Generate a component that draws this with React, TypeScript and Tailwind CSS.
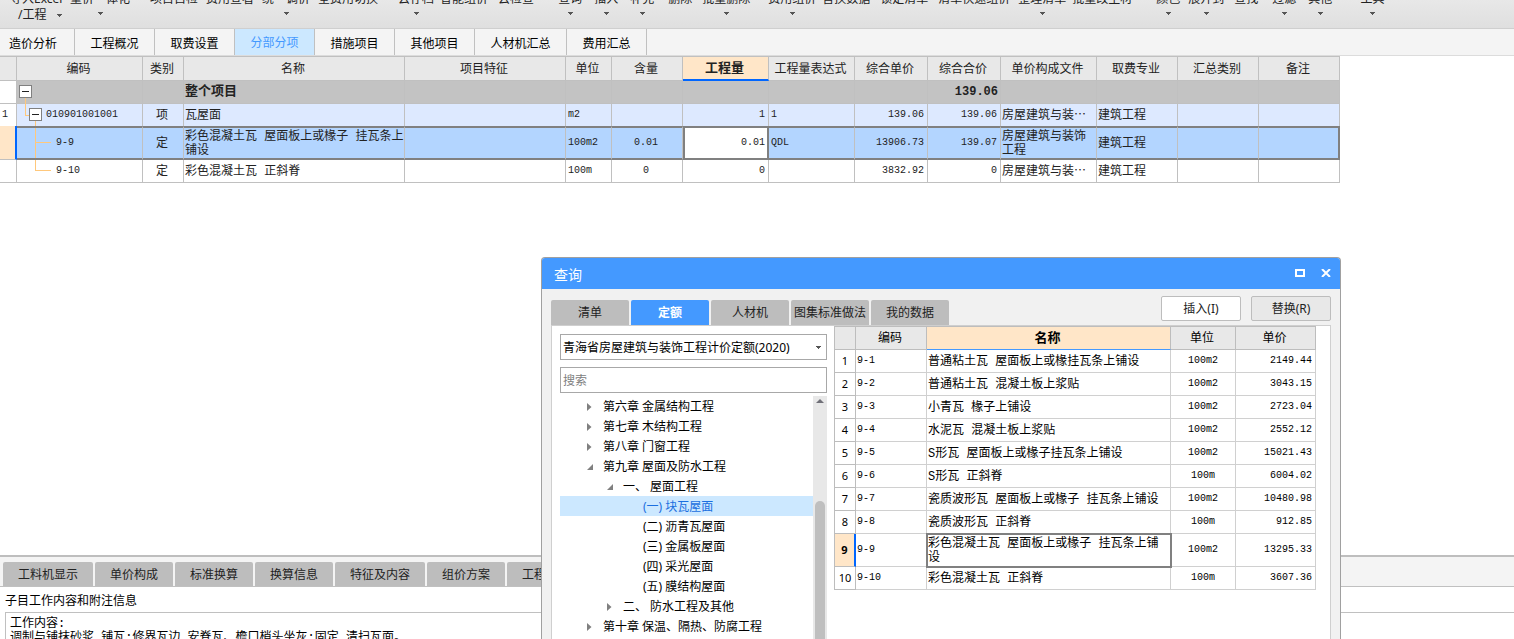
import React, { useState } from "react"
import clsx from "clsx"

interface RibbonItem {
  label: string
  gap: string
  arrow?: boolean
  second?: string
}

interface QuotaRow {
  code: string
  name: React.ReactNode
  unit: string
  price: string
}

interface TreeNode {
  label: string
  level: 1 | 2 | 3
  state?: "open" | "closed"
}

const ribbonItems: RibbonItem[] = [
  { label: "导入Excel", gap: "ml-2.5 w-13", arrow: true, second: "/工程" },
  { label: "量价一体化", gap: "ml-2", arrow: true },
  { label: "项目自检", gap: "ml-5" },
  { label: "费用查看", gap: "ml-2" },
  { label: "统一调价", gap: "ml-2", arrow: true },
  { label: "全费用切换", gap: "ml-2" },
  { label: "云存档", gap: "ml-5", arrow: true },
  { label: "智能组价", gap: "ml-1.5" },
  { label: "云检查", gap: "ml-2.5" },
  { label: "查询", gap: "ml-6", arrow: true },
  { label: "插入", gap: "ml-3", arrow: true },
  { label: "补充", gap: "ml-3", arrow: true },
  { label: "删除", gap: "ml-3.5" },
  { label: "批量删除", gap: "ml-2.5", arrow: true },
  { label: "费用组价", gap: "ml-4.5", arrow: true },
  { label: "替换数据", gap: "ml-1.5" },
  { label: "锁定清单", gap: "ml-2.5" },
  { label: "清单快速组价", gap: "ml-2.5" },
  { label: "整理清单", gap: "ml-2", arrow: true },
  { label: "批量改主材", gap: "ml-1.5" },
  { label: "颜色", gap: "ml-6", arrow: true },
  { label: "展开到", gap: "ml-2", arrow: true },
  { label: "查找", gap: "ml-2.5" },
  { label: "过滤", gap: "ml-3.5", arrow: true },
  { label: "其他", gap: "ml-3", arrow: true },
  { label: "工具", gap: "ml-7", arrow: true },
]

const moduleTabs = [
  { label: "造价分析", width: "w-[75px] pr-2" },
  { label: "工程概况", width: "w-20" },
  { label: "取费设置", width: "w-20" },
  { label: "分部分项", width: "w-20" },
  { label: "措施项目", width: "w-20" },
  { label: "其他项目", width: "w-20" },
  { label: "人材机汇总", width: "w-[92px]" },
  { label: "费用汇总", width: "w-20" },
]

const dockTabs = [
  { label: "工料机显示", width: "w-[90px]" },
  { label: "单价构成", width: "w-[78px]" },
  { label: "标准换算", width: "w-[78px]" },
  { label: "换算信息", width: "w-[78px]" },
  { label: "特征及内容", width: "w-[90px]" },
  { label: "组价方案", width: "w-[78px]" },
  { label: "工程量明细", width: "w-[90px]" },
]

const queryTabs = ["清单", "定额", "人材机", "图集标准做法", "我的数据"]

const treeNodes: TreeNode[] = [
  { label: "第六章 金属结构工程", level: 1, state: "closed" },
  { label: "第七章 木结构工程", level: 1, state: "closed" },
  { label: "第八章 门窗工程", level: 1, state: "closed" },
  { label: "第九章 屋面及防水工程", level: 1, state: "open" },
  { label: "一、 屋面工程", level: 2, state: "open" },
  { label: "(一) 块瓦屋面", level: 3 },
  { label: "(二) 沥青瓦屋面", level: 3 },
  { label: "(三) 金属板屋面", level: 3 },
  { label: "(四) 采光屋面", level: 3 },
  { label: "(五) 膜结构屋面", level: 3 },
  { label: "二、 防水工程及其他", level: 2, state: "closed" },
  { label: "第十章 保温、隔热、防腐工程", level: 1, state: "closed" },
]

const quotaRows: QuotaRow[] = [
  { code: "9-1", name: "普通粘土瓦 屋面板上或椽挂瓦条上铺设", unit: "100m2", price: "2149.44" },
  { code: "9-2", name: "普通粘土瓦 混凝土板上浆贴", unit: "100m2", price: "3043.15" },
  { code: "9-3", name: "小青瓦 椽子上铺设", unit: "100m2", price: "2723.04" },
  { code: "9-4", name: "水泥瓦 混凝土板上浆贴", unit: "100m2", price: "2552.12" },
  { code: "9-5", name: "S形瓦 屋面板上或椽子挂瓦条上铺设", unit: "100m2", price: "15021.43" },
  { code: "9-6", name: "S形瓦 正斜脊", unit: "100m", price: "6004.02" },
  { code: "9-7", name: "瓷质波形瓦 屋面板上或椽子 挂瓦条上铺设", unit: "100m2", price: "10480.98" },
  { code: "9-8", name: "瓷质波形瓦 正斜脊", unit: "100m", price: "912.85" },
  {
    code: "9-9",
    name: (
      <>
        彩色混凝土瓦 屋面板上或椽子 挂瓦条上铺
        <br />设
      </>
    ),
    unit: "100m2",
    price: "13295.33",
  },
  { code: "9-10", name: "彩色混凝土瓦 正斜脊", unit: "100m", price: "3607.36" },
]

const gridFont = "font-['Liberation_Mono','Noto_Sans_CJK_SC',monospace]"

function DownArrow({ className }: { className?: string }) {
  return (
    <svg className={clsx("h-[3px] w-[5px] shrink-0", className)} viewBox="0 0 5 3" shapeRendering="crispEdges">
      <path d="M0 0h5v1H4v1H3v1H2V2H1V1H0z" fill="#555" />
    </svg>
  )
}

function Ribbon() {
  return (
    <header className="h-[29px] shrink-0 overflow-hidden border-b border-[#cfcfcf] bg-linear-to-b from-[#e8e8e8] to-[#dfdfdf]">
      <div className="-mt-2 flex items-start">
        {ribbonItems.map((item) => (
          <button
            key={item.label}
            className={clsx("shrink-0 whitespace-nowrap text-left leading-[14px] text-[#222]", item.gap)}
          >
            <span className="block">{item.label}</span>
            {item.second ? (
              <span className="mt-0.5 flex items-center justify-between pl-2">
                {item.second}
                <DownArrow />
              </span>
            ) : (
              item.arrow && <DownArrow className="mx-auto mt-1.5" />
            )}
          </button>
        ))}
      </div>
    </header>
  )
}

function ModuleTabs() {
  const [active, setActive] = useState("分部分项")
  return (
    <nav className="flex h-[27px] shrink-0 border-b border-[#dcdcdc] bg-[#f4f4f4]">
      {moduleTabs.map((tab) => (
        <button
          key={tab.label}
          onClick={() => setActive(tab.label)}
          className={clsx(
            "shrink-0 border-r border-[#c0c0c0]",
            tab.width,
            active === tab.label ? "bg-[#cce8ff] pt-0.5 text-[#4499ff]" : "pt-1 text-black"
          )}
        >
          {tab.label}
        </button>
      ))}
    </nav>
  )
}

// Branch lines of the outline, with the expand box where a row has children
function Branch({ kind }: { kind: "root" | "item" | "middle" | "last" }) {
  const width = kind === "root" || kind === "item" ? "w-[29px]" : "w-[39px]"
  return (
    <svg className={clsx("h-full shrink-0 overflow-visible", width)} fill="none" shapeRendering="crispEdges">
      {kind === "root" && (
        <>
          <path d="M8.5 17V23" stroke="#ffc87c" />
          <rect x="2.5" y="4.5" width="12" height="12" fill="#fff" stroke="#808080" />
          <path d="M5 10.5h7" stroke="#222" />
        </>
      )}
      {kind === "item" && (
        <>
          <path d="M8.5 0V11.5H12M18.5 17V22" stroke="#ffc87c" />
          <rect x="12.5" y="4.5" width="12" height="12" fill="#fff" stroke="#808080" />
          <path d="M15 10.5h7" stroke="#222" />
        </>
      )}
      {kind === "middle" && <path d="M18.5 0V30M18.5 14.5H34" stroke="#ffc87c" />}
      {kind === "last" && <path d="M18.5 0V10.5H34" stroke="#ffc87c" />}
    </svg>
  )
}

function BillTable() {
  const headers = [
    "",
    "编码",
    "类别",
    "名称",
    "项目特征",
    "单位",
    "含量",
    "工程量",
    "工程量表达式",
    "综合单价",
    "综合合价",
    "单价构成文件",
    "取费专业",
    "汇总类别",
    "备注",
  ]
  const cell = "border-r border-b border-[#c0c0c0] p-0"
  const open = "border-r border-[#c0c0c0] p-0"
  const picked = "border-r border-y-2 border-r-[#c0c0c0] border-y-[#808080] p-0"
  const text = "pt-0.5 pl-px"
  const mid = "pt-0.5 pr-0.5 text-center"
  const num = "pl-0.5 text-[10px]"
  const numMid = "pr-0.5 text-center text-[10px]"
  const numEnd = "pr-[3px] text-right text-[10px]"

  return (
    <table
      className={clsx(
        "w-0 table-fixed border-separate border-spacing-0 border-t border-[#c0c0c0] leading-[14px] whitespace-nowrap text-[#222]",
        gridFont
      )}
    >
      <colgroup>
        <col className="w-[17px]" />
        <col className="w-[126px]" />
        <col className="w-[41px]" />
        <col className="w-[221px]" />
        <col className="w-[161px]" />
        <col className="w-[46px]" />
        <col className="w-[71px]" />
        <col className="w-[86px]" />
        <col className="w-[86px]" />
        <col className="w-[73px]" />
        <col className="w-[73px]" />
        <col className="w-[96px]" />
        <col className="w-[81px]" />
        <col className="w-[81px]" />
        <col className="w-[81px]" />
      </colgroup>
      <thead>
        <tr className="h-6">
          {headers.map((title, i) => (
            <th
              key={i}
              className={clsx(
                "border-r border-[#c0c0c0] p-0 pt-0.5 pr-0.5",
                title === "工程量"
                  ? "border-b-2 border-b-[#0066ff] bg-[#ffe6c8] text-[13px] font-bold"
                  : "border-b bg-[#e8e8e8] font-normal"
              )}
            >
              {title}
            </th>
          ))}
        </tr>
      </thead>
      <tbody>
        <tr className="h-[23px] bg-[#c3c3c3] font-bold">
          <td className={clsx(cell, "bg-white")} />
          <td className={cell}>
            <div className="flex h-[22px] items-center">
              <Branch kind="root" />
            </div>
          </td>
          <td className={cell} />
          <td className={clsx(cell, "pl-px text-[13px]")}>整个项目</td>
          <td className={cell} />
          <td className={cell} />
          <td className={cell} />
          <td className={cell} />
          <td className={cell} />
          <td className={cell} />
          <td className={clsx(cell, "pr-0.5 text-right")}>139.06</td>
          <td className={cell} />
          <td className={cell} />
          <td className={cell} />
          <td className={cell} />
        </tr>
        <tr className="h-[22px] bg-[#dde9ff]">
          <td className={clsx(open, num, "bg-white")}>1</td>
          <td className={clsx(open, "text-[10px]")}>
            <div className="flex h-[22px] items-center">
              <Branch kind="item" />
              010901001001
            </div>
          </td>
          <td className={clsx(open, mid)}>项</td>
          <td className={clsx(open, text)}>瓦屋面</td>
          <td className={open} />
          <td className={clsx(open, num)}>m2</td>
          <td className={open} />
          <td className={clsx(open, numEnd)}>1</td>
          <td className={clsx(open, num)}>1</td>
          <td className={clsx(open, numEnd)}>139.06</td>
          <td className={clsx(open, numEnd)}>139.06</td>
          <td className={clsx(open, text)}>房屋建筑与装⋯</td>
          <td className={clsx(open, text)}>建筑工程</td>
          <td className={open} />
          <td className={open} />
        </tr>
        <tr className="h-[34px] bg-[#b3d5ff]">
          <td className="border-r-2 border-b border-r-[#0066ff] border-b-[#c0c0c0] bg-[#ffe6c8]" />
          <td className={clsx(picked, "text-[10px]")}>
            <div className="flex h-[30px] items-center">
              <Branch kind="middle" />
              9-9
            </div>
          </td>
          <td className={clsx(picked, mid)}>定</td>
          <td className={clsx(picked, text)}>
            彩色混凝土瓦 屋面板上或椽子 挂瓦条上
            <br />
            铺设
          </td>
          <td className={picked} />
          <td className={clsx(picked, num)}>100m2</td>
          <td className={clsx(picked, numMid)}>0.01</td>
          <td className="border-2 border-[#808080] bg-white p-0 pr-0.5 text-right text-[10px]">0.01</td>
          <td className={clsx(picked, num)}>QDL</td>
          <td className={clsx(picked, numEnd)}>13906.73</td>
          <td className={clsx(picked, numEnd)}>139.07</td>
          <td className={clsx(picked, text)}>
            房屋建筑与装饰
            <br />
            工程
          </td>
          <td className={clsx(picked, text)}>建筑工程</td>
          <td className={picked} />
          <td className="border-y-2 border-r-2 border-[#808080]" />
        </tr>
        <tr className="h-[23px]">
          <td className={cell} />
          <td className={clsx(cell, "text-[10px]")}>
            <div className="flex h-[22px] items-center">
              <Branch kind="last" />
              9-10
            </div>
          </td>
          <td className={clsx(cell, mid)}>定</td>
          <td className={clsx(cell, text)}>彩色混凝土瓦 正斜脊</td>
          <td className={cell} />
          <td className={clsx(cell, num)}>100m</td>
          <td className={clsx(cell, numMid)}>0</td>
          <td className={clsx(cell, numEnd)}>0</td>
          <td className={cell} />
          <td className={clsx(cell, numEnd)}>3832.92</td>
          <td className={clsx(cell, numEnd)}>0</td>
          <td className={clsx(cell, text)}>房屋建筑与装⋯</td>
          <td className={clsx(cell, text)}>建筑工程</td>
          <td className={cell} />
          <td className={cell} />
        </tr>
      </tbody>
    </table>
  )
}

function DetailDock() {
  return (
    <section className="flex h-[84px] shrink-0 flex-col overflow-hidden border-t-2 border-[#bebebe] bg-[#f4f4f4]">
      <div className="flex gap-0.5 pt-[5px] pl-[3px]">
        {dockTabs.map((tab) => (
          <button
            key={tab.label}
            className={clsx("h-6 shrink-0 rounded-t-xs bg-[#bdbdbd] pt-0.5 text-[#222]", tab.width)}
          >
            {tab.label}
          </button>
        ))}
      </div>
      <div className="grow border-t border-[#c0c0c0] bg-white">
        <h2 className="pt-0.5 pl-[5px] leading-[23px] text-black">子目工作内容和附注信息</h2>
        <div
          className={clsx(
            "ml-[5px] border-t border-l border-[#c0c0c0] pt-1 pl-1 leading-[14px] whitespace-nowrap text-black",
            gridFont
          )}
        >
          <p>工作内容:</p>
          <p>调制与铺抹砂浆,铺瓦;修界瓦边,安脊瓦、檐口梢头坐灰;固定,清扫瓦面。</p>
        </div>
      </div>
    </section>
  )
}

function Caret({ state }: { state?: "open" | "closed" }) {
  if (!state) return <span className="w-4 shrink-0" />
  return (
    <svg className="h-2 w-4 shrink-0" viewBox="0 0 16 8">
      {state === "closed" ? (
        <path d="M0 0l4.500 4L0 8z" fill="#808080" />
      ) : (
        <path d="M6 1v6H0z" fill="#808080" />
      )}
    </svg>
  )
}

function ChapterTree() {
  const [selected, setSelected] = useState("(一) 块瓦屋面")
  return (
    <div className="mt-[3px] flex min-h-0 grow">
      <ul className="grow">
        {treeNodes.map((node) => (
          <li key={node.label}>
            <button
              onClick={() => setSelected(node.label)}
              className={clsx(
                "flex h-5 w-full items-center pt-0.5 text-left leading-4",
                node.level === 1 && "pl-[27px]",
                node.level === 2 && "pl-[47px]",
                node.level === 3 && "pl-[67px]",
                selected === node.label ? "bg-[#cce8ff] text-[#1a6fe0]" : "text-black"
              )}
            >
              <Caret state={node.state} />
              {node.label}
            </button>
          </li>
        ))}
      </ul>
      <div className="flex w-3.5 shrink-0 flex-col items-center bg-[#e8e8e8]">
        <svg className="mt-[3px] h-1 w-2" viewBox="0 0 8 4">
          <path d="M4 0l4 4H0z" fill="#707078" />
        </svg>
        <div className="mt-[98px] w-2.5 grow rounded-t-full bg-[#bfbfbf]" />
      </div>
    </div>
  )
}

function QuotaTable() {
  const line = "border-r border-b border-[#d0d0d0] p-0"
  const head = "border-r border-b border-[#bdbdbd] bg-[#e8e8e8] p-0 pt-0.5 pr-0.5 font-normal"
  return (
    <table
      className={clsx(
        "w-0 table-fixed border-separate border-spacing-0 border-t border-l border-[#bdbdbd] leading-[14px] whitespace-nowrap text-black",
        gridFont
      )}
    >
      <colgroup>
        <col className="w-[21px]" />
        <col className="w-[71px]" />
        <col className="w-[244px]" />
        <col className="w-[65px]" />
        <col className="w-[80px]" />
      </colgroup>
      <thead>
        <tr className="h-[23px]">
          <th className={head} />
          <th className={head}>编码</th>
          <th className="border-r border-b border-r-[#bdbdbd] border-b-[#4499ff] bg-[#ffe6c8] p-0 pt-0.5 pr-0.5 text-[13px] font-bold">
            名称
          </th>
          <th className={head}>单位</th>
          <th className={head}>单价</th>
        </tr>
      </thead>
      <tbody>
        {quotaRows.map((row, i) => {
          const current = row.code === "9-9"
          return (
            <tr key={row.code} className={current ? "h-[33px]" : "h-[23px]"}>
              <td
                className={clsx(
                  "border-b border-[#bdbdbd] p-0 text-center font-['Noto_Sans',sans-serif] text-[11px]",
                  current ? "border-r-2 border-r-[#0066ff] bg-[#ffe6c8] font-bold" : "border-r"
                )}
              >
                {i + 1}
              </td>
              <td className={clsx(line, "pl-px text-[10px]")}>{row.code}</td>
              <td
                className={clsx(line, "pt-0.5 pl-px", current && "outline-2 -outline-offset-1 outline-[#808080]")}
              >
                {row.name}
              </td>
              <td className={clsx(line, "text-center text-[10px]")}>{row.unit}</td>
              <td className={clsx(line, "pr-[3px] text-right text-[10px]")}>{row.price}</td>
            </tr>
          )
        })}
      </tbody>
    </table>
  )
}

function QueryDialog() {
  const [tab, setTab] = useState("定额")
  return (
    <div
      role="dialog"
      aria-label="查询"
      className="absolute top-[257px] bottom-0 left-[541px] flex w-[800px] flex-col overflow-hidden rounded-t-[4px] border-x border-t border-[#a0a0a0] bg-[#f1f1f1]"
    >
      <div className="flex h-[31px] shrink-0 items-center bg-[#4499ff] pb-0.5 pl-3 text-white">
        <h1 className="grow pt-1 text-sm">查询</h1>
        <button aria-label="最大化" className="mr-4">
          <svg className="h-2 w-2.5" viewBox="0 0 10 8" shapeRendering="crispEdges">
            <rect x="1" y="1" width="8" height="6" fill="none" stroke="#fff" strokeWidth="2" />
          </svg>
        </button>
        <button aria-label="关闭" className="mr-[9px]">
          <svg className="h-2 w-2.5" viewBox="0 0 10 8">
            <path d="M1 0l8 8M9 0L1 8" stroke="#fff" strokeWidth="2" />
          </svg>
        </button>
      </div>
      <div className="flex h-9 shrink-0 items-end px-[9px]">
        <div role="tablist" className="flex grow gap-0.5">
          {queryTabs.map((label) => (
            <button
              key={label}
              role="tab"
              aria-selected={tab === label}
              onClick={() => setTab(label)}
              className={clsx(
                "h-[25px] w-[78px] rounded-t-xs whitespace-nowrap",
                tab === label ? "bg-[#4499ff] font-bold text-white" : "bg-[#bdbdbd] text-[#222]"
              )}
            >
              {label}
            </button>
          ))}
        </div>
        <div className="flex gap-2.5 pb-1">
          <button className="h-[25px] w-20 rounded-xs border border-[#bdbdbd] bg-white text-[#222]">插入(I)</button>
          <button className="h-[25px] w-20 rounded-xs border border-[#bdbdbd] bg-[#e8e8e8] text-[#222]">
            替换(R)
          </button>
        </div>
      </div>
      <div className="mx-[9px] flex min-h-0 grow border-x border-t border-[#cfcfcf] bg-white">
        <div className="flex w-[282px] shrink-0 flex-col pt-2 pr-[7px] pl-2">
          <div className="relative">
            <select
              aria-label="定额库"
              className="block h-[26px] w-full appearance-none border border-[#a8a8a8] bg-white pt-0.5 pl-0.5 text-black"
            >
              <option>青海省房屋建筑与装饰工程计价定额(2020)</option>
            </select>
            <DownArrow className="pointer-events-none absolute top-3 right-1.5" />
          </div>
          <input
            type="text"
            aria-label="搜索"
            placeholder="搜索"
            className="mt-[7px] block h-[26px] w-full shrink-0 border border-[#a8a8a8] pl-0.5 placeholder:text-[#808080]"
          />
          <ChapterTree />
        </div>
        <div>
          <QuotaTable />
        </div>
      </div>
    </div>
  )
}

export default function App() {
  return (
    <div className="relative flex h-screen flex-col overflow-hidden bg-white font-['Noto_Sans','Noto_Sans_CJK_SC',sans-serif] text-[12px] leading-4">
      <Ribbon />
      <ModuleTabs />
      <main className="min-h-0 grow">
        <BillTable />
      </main>
      <DetailDock />
      <QueryDialog />
    </div>
  )
}
